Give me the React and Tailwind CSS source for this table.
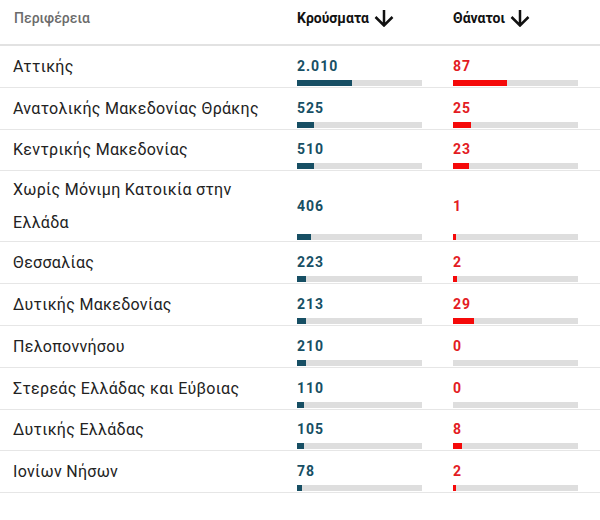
import React from "react";

const rows = [
  { name: "Αττικής", c: "2.010", cw: 55, d: "87", dw: 54 },
  { name: "Ανατολικής Μακεδονίας Θράκης", c: "525", cw: 17, d: "25", dw: 18 },
  { name: "Κεντρικής Μακεδονίας", c: "510", cw: 17, d: "23", dw: 16 },
  { name: "Χωρίς Μόνιμη Κατοικία στην Ελλάδα", c: "406", cw: 14, d: "1", dw: 3 },
  { name: "Θεσσαλίας", c: "223", cw: 9, d: "2", dw: 4 },
  { name: "Δυτικής Μακεδονίας", c: "213", cw: 9, d: "29", dw: 21 },
  { name: "Πελοποννήσου", c: "210", cw: 9, d: "0", dw: 0 },
  { name: "Στερεάς Ελλάδας και Εύβοιας", c: "110", cw: 7, d: "0", dw: 0 },
  { name: "Δυτικής Ελλάδας", c: "105", cw: 7, d: "8", dw: 9 },
  { name: "Ιονίων Νήσων", c: "78", cw: 5, d: "2", dw: 3 },
];

function Arrow() {
  return (
    <svg width="20" height="18" viewBox="0 0 20 18" className="ml-[5px] mt-[-1px]">
      <path d="M10 1 V16.5 M1.5 8 L10 16.5 L18.5 8" fill="none" stroke="#111" strokeWidth="2.5" />
    </svg>
  );
}

function Cell({ value, width, textColor, barColor }) {
  return (
    <div className="w-[125px] self-stretch flex flex-col">
      <div className="h-[7px]" />
      <div className={`flex-1 flex items-center text-[14px] font-bold tracking-[1px] ${textColor}`}>{value}</div>
      <div className="h-[7px] pb-[1px] flex">
        <div className="h-full w-full bg-[#dedede] flex">
          <div className={`h-full ${barColor}`} style={{ width: `${width}px` }} />
        </div>
      </div>
    </div>
  );
}

export default function App() {
  return (
    <div className="w-[600px] h-[520px] bg-white font-['Roboto',sans-serif]">
      <div className="h-[46px] flex items-start pl-[14px] pt-[8px] border-b-2 border-[#e2e2e2] leading-[20px] text-[14px]">
        <div className="w-[283px] font-medium text-[#6b6b6b]">Περιφέρεια</div>
        <div className="w-[156px] flex items-center font-bold text-[#111]">
          Κρούσματα <Arrow />
        </div>
        <div className="flex items-center font-bold text-[#111]">
          Θάνατοι <Arrow />
        </div>
      </div>
      {rows.map((r) => (
        <div key={r.name} className="min-h-[41.8px] flex items-stretch pl-[13px] border-b border-[#e6e6e6]">
          <div className="w-[284px] flex items-center py-[2px]">
            <div className="w-[272px] text-[16px] leading-[33px] tracking-[0.3px] text-[#222]">{r.name}</div>
          </div>
          <Cell value={r.c} width={r.cw} textColor="text-[#174f64]" barColor="bg-[#174f64]" />
          <div className="w-[31px]" />
          <Cell value={r.d} width={r.dw} textColor="text-[#e31b23]" barColor="bg-[#f50a0a]" />
        </div>
      ))}
    </div>
  );
}
